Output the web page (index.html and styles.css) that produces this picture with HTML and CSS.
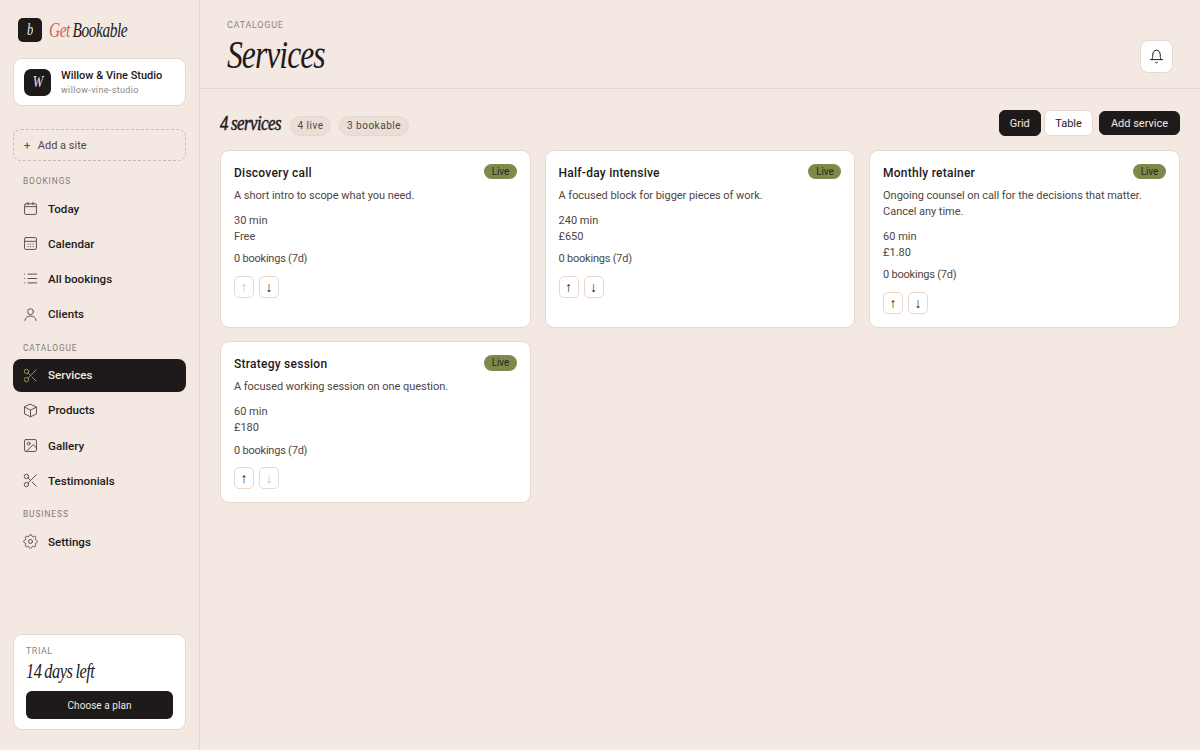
FILE: index.html
```html
<!DOCTYPE html>
<html lang="en">
<head>
    <meta charset="UTF-8">
    <meta name="viewport" content="width=device-width, initial-scale=1.0">
    <title>Services - Get Bookable</title>
    <link rel="stylesheet" href="styles.css">
</head>
<body>

<!-- Shared icons -->
<svg class="sprite" width="0" height="0">
    <symbol id="icon-today" viewBox="0 0 24 24"><rect x="2.500" y="4.500" width="19" height="17" rx="2"/><path d="M2.500 9h19M8 2v4M16 2v4"/></symbol>
    <symbol id="icon-calendar" viewBox="0 0 24 24"><rect x="2.500" y="2.500" width="19" height="19" rx="2"/><path d="M2.500 8.500h19M8 13h.5M12 13h.5M16 13h.5M8 17h.5M12 17h.5M16 17h.5"/></symbol>
    <symbol id="icon-list" viewBox="0 0 24 24"><path d="M8 5h14M8 12h14M8 19h14M2.500 5h.2M2.500 12h.2M2.500 19h.2"/></symbol>
    <symbol id="icon-user" viewBox="0 0 24 24"><circle cx="12" cy="7.500" r="4.700"/><path d="M3 21.500c.6-4.500 4-7 9-7s8.400 2.500 9 7"/></symbol>
    <symbol id="icon-scissors" viewBox="0 0 24 24"><circle cx="5.500" cy="5.500" r="3.500"/><circle cx="5.500" cy="18.500" r="3.500"/><path d="M21 3L8 16.200M14.500 14.500L21 21M8 7.800L12 12"/></symbol>
    <symbol id="icon-box" viewBox="0 0 24 24"><path d="M12 2l9.500 4.500v11L12 22l-9.500-4.500v-11zM2.500 6.500L12 11.500l9.500-5M12 11.500V22"/></symbol>
    <symbol id="icon-image" viewBox="0 0 24 24"><rect x="2.500" y="2.500" width="19" height="19" rx="2"/><circle cx="9" cy="9" r="2.300"/><path d="M21.500 16l-5-5.500L5 21.500"/></symbol>
    <symbol id="icon-gear" viewBox="0 0 24 24"><circle cx="12" cy="12" r="3.200"/><path d="M12 1c1.700 0 1.800 1 2.200 2.200.4 1 1.500 1.500 2.600 1 1.100-.5 2-1 3 0s.5 1.900 0 3c-.5 1.100 0 2.200 1 2.600C22 10.200 23 10.300 23 12s-1 1.800-2.200 2.200c-1 .4-1.500 1.500-1 2.600.5 1.100 1 2 0 3s-1.900.5-3 0c-1.100-.5-2.200 0-2.600 1C13.800 22 13.700 23 12 23s-1.800-1-2.200-2.200c-.4-1-1.500-1.500-2.600-1-1.100.5-2 1-3 0s-.5-1.900 0-3c.5-1.100 0-2.200-1-2.600C2 13.800 1 13.700 1 12s1-1.800 2.200-2.200c1-.4 1.500-1.500 1-2.600-.5-1.100-1-2 0-3s1.900-.5 3 0c1.100.5 2.200 0 2.600-1C10.200 2 10.300 1 12 1z"/></symbol>
    <symbol id="icon-bell" viewBox="0 0 24 24"><path d="M2.500 17h19M4.500 17c1.200-2 1.500-4 1.500-7.500C6 5 8.300 2 12 2s6 3 6 7.500c0 3.500.3 5.500 1.500 7.500M10.300 21.500c1 1 2.400 1 3.400 0"/></symbol>
</svg>

<div class="app">
    <aside class="sidebar">
        <div class="brand">
            <span class="brand-mark"><span class="serif">b</span></span>
            <span class="brand-name serif"><span class="accent">Get</span> Bookable</span>
        </div>

        <div class="site-card">
            <span class="site-logo"><span class="serif">W</span></span>
            <div>
                <div class="site-name">Willow &amp; Vine Studio</div>
                <div class="site-slug">willow-vine-studio</div>
            </div>
        </div>

        <a class="add-site"><span class="plus">+</span>Add a site</a>

        <nav class="nav">
            <div class="nav-title">BOOKINGS</div>
            <a class="nav-link"><svg class="icon"><use href="#icon-today"/></svg>Today</a>
            <a class="nav-link"><svg class="icon"><use href="#icon-calendar"/></svg>Calendar</a>
            <a class="nav-link"><svg class="icon"><use href="#icon-list"/></svg>All bookings</a>
            <a class="nav-link"><svg class="icon"><use href="#icon-user"/></svg>Clients</a>

            <div class="nav-title">CATALOGUE</div>
            <a class="nav-link active"><svg class="icon"><use href="#icon-scissors"/></svg>Services</a>
            <a class="nav-link"><svg class="icon"><use href="#icon-box"/></svg>Products</a>
            <a class="nav-link"><svg class="icon"><use href="#icon-image"/></svg>Gallery</a>
            <a class="nav-link"><svg class="icon"><use href="#icon-scissors"/></svg>Testimonials</a>

            <div class="nav-title">BUSINESS</div>
            <a class="nav-link"><svg class="icon"><use href="#icon-gear"/></svg>Settings</a>
        </nav>

        <div class="trial">
            <div class="eyebrow">TRIAL</div>
            <div class="trial-days serif">14 days left</div>
            <button class="trial-button">Choose a plan</button>
        </div>
    </aside>

    <main class="main">
        <header class="page-header">
            <div>
                <div class="eyebrow">CATALOGUE</div>
                <h1 class="page-title serif">Services</h1>
            </div>
            <button class="bell"><svg class="icon"><use href="#icon-bell"/></svg></button>
        </header>

        <section class="content">
            <div class="toolbar">
                <h2 class="count serif">4 services</h2>
                <span class="chip chip-live">4 live</span>
                <span class="chip chip-bookable">3 bookable</span>
                <div class="actions">
                    <button class="btn btn-grid dark">Grid</button>
                    <button class="btn btn-table">Table</button>
                    <button class="btn btn-add dark">Add service</button>
                </div>
            </div>

            <div class="grid">
                <article class="card">
                    <div class="card-head"><h3>Discovery call</h3><span class="live">Live</span></div>
                    <p class="desc">A short intro to scope what you need.</p>
                    <div class="meta">30 min<br>Free</div>
                    <div class="booked">0 bookings (7d)</div>
                    <div class="order"><button class="move" disabled>↑</button><button class="move">↓</button></div>
                </article>
                <article class="card">
                    <div class="card-head"><h3>Half-day intensive</h3><span class="live">Live</span></div>
                    <p class="desc">A focused block for bigger pieces of work.</p>
                    <div class="meta">240 min<br>£650</div>
                    <div class="booked">0 bookings (7d)</div>
                    <div class="order"><button class="move">↑</button><button class="move">↓</button></div>
                </article>
                <article class="card">
                    <div class="card-head"><h3>Monthly retainer</h3><span class="live">Live</span></div>
                    <p class="desc">Ongoing counsel on call for the decisions that matter. Cancel any time.</p>
                    <div class="meta">60 min<br>£1.80</div>
                    <div class="booked">0 bookings (7d)</div>
                    <div class="order"><button class="move">↑</button><button class="move">↓</button></div>
                </article>
                <article class="card">
                    <div class="card-head"><h3>Strategy session</h3><span class="live">Live</span></div>
                    <p class="desc">A focused working session on one question.</p>
                    <div class="meta">60 min<br>£180</div>
                    <div class="booked">0 bookings (7d)</div>
                    <div class="order"><button class="move">↑</button><button class="move" disabled>↓</button></div>
                </article>
            </div>
        </section>
    </main>
</div>

</body>
</html>
```
FILE: styles.css
```css
* {
    box-sizing: border-box;
}

body {
    margin: 0;
    background-color: #f3e8e2;
    color: #1e1a19;
    font-family: "Roboto", "Liberation Sans", sans-serif;
    font-size: 11px;
}

h1, h2, h3, p {
    margin: 0;
    font-weight: 400;
}

button {
    padding: 0;
    font-family: inherit;
    font-size: 11px;
    color: inherit;
}

.sprite {
    display: block;
}

/* Condensed italic used for headings */
.serif {
    display: block;
    font-family: "Liberation Serif", serif;
    font-style: italic;
    white-space: nowrap;
    letter-spacing: -0.03em;
    word-spacing: -0.04em;
    transform: scaleX(0.8);
    transform-origin: left center;
}

.icon {
    width: 15px;
    height: 15px;
    fill: none;
    stroke: currentColor;
    stroke-width: 1.6;
    stroke-linecap: round;
    stroke-linejoin: round;
}

.app {
    display: flex;
    height: 750px;
}

/* Sidebar */
.sidebar {
    display: flex;
    flex-direction: column;
    width: 200px;
    padding: 18px 13px 20px;
    border-right: 1px solid #e6d8ce;
}

.brand {
    display: flex;
    align-items: center;
    gap: 7px;
    height: 24px;
    padding-left: 5px;
}

.brand-mark,
.site-logo {
    display: flex;
    align-items: center;
    justify-content: center;
    flex: none;
    width: 24px;
    height: 24px;
    border-radius: 5px;
    background-color: #1e1a19;
    color: #f3e8e2;
    font-size: 17px;
}

.brand-mark .serif,
.site-logo .serif {
    transform: scaleX(0.74);
    transform-origin: center;
}

.brand-name {
    width: 79px;
    font-size: 20px;
    transform: scaleX(0.77);
}

.accent {
    color: #c96a55;
}

.site-card {
    display: flex;
    align-items: center;
    gap: 10px;
    width: 173px;
    height: 48px;
    margin-top: 16px;
    padding-left: 10px;
    border: 1px solid #e6d8ce;
    border-radius: 9px;
    background-color: #fff;
}

.site-logo {
    width: 27px;
    height: 27px;
    border-radius: 7px;
}

.site-name {
    font-size: 11px;
    line-height: 15px;
    font-weight: 500;
    white-space: nowrap;
}

.site-slug {
    color: #8f8580;
    font-size: 9px;
    line-height: 14px;
    letter-spacing: 0.35px;
}

.add-site {
    display: flex;
    align-items: center;
    gap: 7.5px;
    width: 173px;
    height: 32px;
    margin-top: 23px;
    padding: 1px 0 0 10px;
    border: 1px dashed #cbbcb3;
    border-radius: 8px;
    color: #4f4642;
}

.nav {
    width: 173px;
}

.nav-title {
    height: 12px;
    margin: 14px 0 5px 10px;
    color: #857b76;
    font-size: 8.4px;
    line-height: 12px;
    letter-spacing: 0.9px;
}

.nav-link + .nav-title {
    margin-top: 11px;
    margin-bottom: 4.8px;
}

.nav-link {
    display: flex;
    align-items: center;
    gap: 10px;
    height: 33.2px;
    margin-bottom: 2px;
    padding-left: 10px;
    border-radius: 8px;
    font-size: 11.6px;
    font-weight: 500;
}

.nav-link .icon {
    color: #5d534f;
}

.nav-link.active {
    background-color: #1e1a19;
    color: #f3e8e2;
}

.nav-link.active .icon {
    color: #8b9a50;
}

.trial {
    width: 173px;
    height: 96px;
    margin-top: auto;
    padding: 10px 12px;
    border: 1px solid #e6d8ce;
    border-radius: 9px;
    background-color: #fff;
}

.eyebrow {
    color: #8f8580;
    font-size: 9px;
    line-height: 13px;
    letter-spacing: 0.75px;
}

.trial .eyebrow {
    line-height: 12px;
    letter-spacing: 0.5px;
}

.trial-days {
    height: 23px;
    margin: 3px 0 8px;
    font-size: 20px;
    line-height: 23px;
    transform: scaleX(0.82);
}

.trial-button {
    display: block;
    width: 147px;
    height: 28px;
    border: 0;
    border-radius: 6px;
    background-color: #1e1a19;
    color: #f3e8e2;
    font-size: 10px;
    letter-spacing: 0.05px;
}

/* Page header */
.main {
    flex: 1;
}

.page-header {
    display: flex;
    justify-content: space-between;
    height: 89px;
    padding: 19px 27px 0;
    border-bottom: 1px solid #e6d8ce;
}

.page-title {
    width: 99px;
    font-size: 40px;
    line-height: 46px;
    transform: scaleX(0.79);
}

.bell {
    display: flex;
    align-items: center;
    justify-content: center;
    width: 33px;
    height: 33px;
    margin-top: 21px;
    border: 1px solid #e6d8ce;
    border-radius: 8px;
    background-color: #fff;
}

/* Services */
.content {
    padding: 21px 20px;
}

.toolbar {
    display: flex;
    align-items: center;
    height: 26px;
    margin-bottom: 14px;
}

.count {
    width: 70px;
    font-size: 20px;
    transform: scaleX(0.84);
    -webkit-text-stroke: 0.5px #1e1a19;
}

.chip {
    height: 20px;
    margin: 6px 8px 0 0;
    border: 1px solid #e6d8ce;
    border-radius: 10px;
    background-color: #eadfd6;
    color: #4f4642;
    font-size: 10px;
    line-height: 18px;
    letter-spacing: 0.5px;
    text-align: center;
}

.chip-live {
    width: 41px;
}

.chip-bookable {
    width: 70px;
}

.actions {
    display: flex;
    align-items: center;
    margin-left: auto;
}

.btn {
    height: 26px;
    border: 1px solid #e6d8ce;
    border-radius: 6px;
    background-color: #fff;
}

.btn.dark {
    border-color: #1e1a19;
    background-color: #1e1a19;
    color: #f3e8e2;
}

.btn-grid {
    width: 42.5px;
    margin-right: 3px;
}

.btn-table {
    width: 49px;
    margin-right: 6px;
}

.btn-add {
    width: 81px;
    height: 24px;
}

.grid {
    display: grid;
    grid-template-columns: repeat(3, 1fr);
    gap: 13.6px;
}

.card {
    padding: 13px;
    border: 1px solid #e6d8ce;
    border-radius: 9px;
    background-color: #fff;
    color: #4f4642;
    line-height: 15.8px;
}

.card-head {
    display: flex;
    justify-content: space-between;
    height: 19px;
}

.card h3 {
    color: #1e1a19;
    font-size: 12px;
    line-height: 19px;
    font-weight: 500;
    letter-spacing: 0.25px;
}

.live {
    width: 33px;
    height: 15.4px;
    border-radius: 8px;
    background-color: #7d8a4a;
    color: #2c2820;
    font-size: 10px;
    line-height: 16px;
    letter-spacing: -0.1px;
    text-align: center;
}

.desc {
    margin: 4.8px 0 9.4px;
    letter-spacing: -0.04px;
}

.booked {
    margin: 6.6px 0 9px;
    letter-spacing: -0.22px;
}

.order {
    display: flex;
    gap: 5px;
}

.move {
    width: 20px;
    height: 22px;
    border: 1px solid #e6d8ce;
    border-radius: 5px;
    background-color: #fff;
    color: #1e1a19;
    font-size: 14px;
    line-height: 20px;
}

.move:disabled {
    opacity: 1;
    color: #c9c2be;
}
```
